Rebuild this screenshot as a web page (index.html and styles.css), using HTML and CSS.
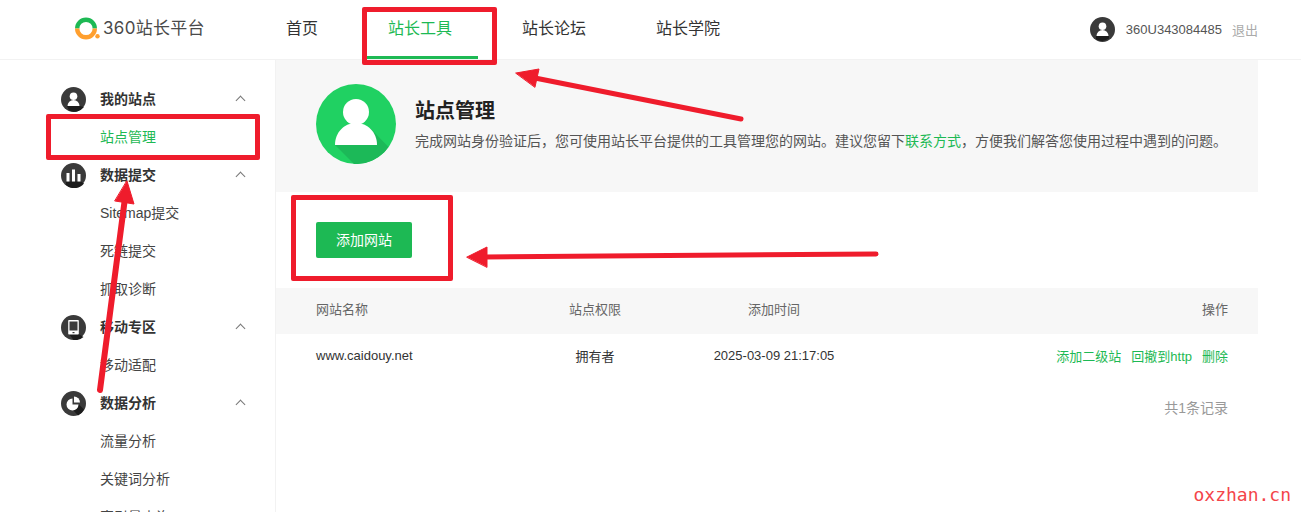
FILE: index.html
```html
<!DOCTYPE html>
<html lang="zh-CN">
<head>
    <meta charset="UTF-8">
    <title>360站长平台 - 站点管理</title>
    <link rel="stylesheet" href="styles.css">
</head>
<body>

    <!-- Top bar -->
    <header class="topbar">
        <div class="logo">
            <svg class="logo-mark" width="25" height="24" viewBox="0 0 25 24">
                <path d="M2.200 12.500a8.800 8.800 0 1 1 17.600 0" fill="none" stroke="#1db954" stroke-width="4.400"/>
                <path d="M2.200 12.500a8.800 8.800 0 0 0 17.600 0" fill="none" stroke="#ff9f2e" stroke-width="4.400"/>
                <circle cx="22.500" cy="20.300" r="2.200" fill="#ff9f2e"/>
            </svg>
            <span class="logo-text">360站长平台</span>
        </div>
        <nav class="nav">
            <a href="#">首页</a>
            <a href="#" class="active">站长工具</a>
            <a href="#">站长论坛</a>
            <a href="#">站长学院</a>
        </nav>
        <div class="user">
            <svg class="round-icon" width="25" height="25" viewBox="0 0 25 25">
                <circle cx="12.500" cy="12.500" r="12.500" fill="#3a3a3a"/>
                <path d="M6 19h13v2.500a12.500 12.500 0 0 1-13 .8z" fill="#1c1c1c"/>
                <circle cx="12.500" cy="9.300" r="3.800" fill="#fff"/>
                <path d="M6.500 19a6 6 0 0 1 12 0z" fill="#fff"/>
            </svg>
            <span class="user-name">360U343084485</span>
            <a href="#" class="logout">退出</a>
        </div>
    </header>

    <div class="layout">

        <!-- Sidebar -->
        <aside class="sidebar">
            <div class="side-group">
                <svg class="round-icon" width="25" height="25" viewBox="0 0 25 25">
                    <circle cx="12.500" cy="12.500" r="12.500" fill="#3a3a3a"/>
                    <path d="M6 19h13l4 1a12.500 12.500 0 0 1-15 3.600z" fill="#1c1c1c"/>
                    <circle cx="12.500" cy="9.300" r="3.800" fill="#fff"/>
                    <path d="M6.500 19a6 6 0 0 1 12 0z" fill="#fff"/>
                </svg>
                <span>我的站点</span>
                <i class="chevron"></i>
            </div>
            <a href="#" class="side-item active">站点管理</a>

            <div class="side-group">
                <svg class="round-icon" width="25" height="25" viewBox="0 0 25 25">
                    <circle cx="12.500" cy="12.500" r="12.500" fill="#3a3a3a"/>
                    <path d="M5 18.500h15l3 2a12.500 12.500 0 0 1-18 1.500z" fill="#1c1c1c"/>
                    <path d="M5.500 10h3v8.500h-3zM11 6.500h3v12h-3zM16.500 11h3v7.500h-3z" fill="#fff"/>
                </svg>
                <span>数据提交</span>
                <i class="chevron"></i>
            </div>
            <a href="#" class="side-item">Sitemap提交</a>
            <a href="#" class="side-item">死链提交</a>
            <a href="#" class="side-item">抓取诊断</a>

            <div class="side-group">
                <svg class="round-icon" width="25" height="25" viewBox="0 0 25 25">
                    <circle cx="12.500" cy="12.500" r="12.500" fill="#3a3a3a"/>
                    <path d="M8 19h9.500l5 3a12.500 12.500 0 0 1-10 3z" fill="#1c1c1c"/>
                    <rect x="7.200" y="5" width="10.600" height="14.600" rx="0.800" fill="#fff"/>
                    <rect x="8.500" y="6.500" width="8" height="9" fill="#3a3a3a"/>
                    <rect x="11.500" y="17" width="2" height="1.200" fill="#3a3a3a"/>
                </svg>
                <span>移动专区</span>
                <i class="chevron"></i>
            </div>
            <a href="#" class="side-item">移动适配</a>

            <div class="side-group">
                <svg class="round-icon" width="25" height="25" viewBox="0 0 25 25">
                    <circle cx="12.500" cy="12.500" r="12.500" fill="#3a3a3a"/>
                    <path d="M12 19l5 5.500a12.500 12.500 0 0 0 6-6l-5-5z" fill="#1c1c1c"/>
                    <path d="M11.500 7.500v6h6a6 6 0 1 1-6-6z" fill="#fff"/>
                    <path d="M13 5.500a6 6 0 0 1 6 6h-6z" fill="#fff"/>
                </svg>
                <span>数据分析</span>
                <i class="chevron"></i>
            </div>
            <a href="#" class="side-item">流量分析</a>
            <a href="#" class="side-item">关键词分析</a>
            <a href="#" class="side-item">索引量查询</a>
        </aside>

        <!-- Main content -->
        <main class="content">
            <section class="banner">
                <svg class="banner-icon" width="80" height="80" viewBox="0 0 80 80">
                    <circle cx="40" cy="40" r="40" fill="#20d162"/>
                    <path d="M19 61L38 80A40 40 0 0 0 72.500 63L54 44z" fill="#1cb958"/>
                    <circle cx="40" cy="28" r="13" fill="#fff"/>
                    <path d="M19 61c0-13 9.500-22 21-22s21 9 21 22z" fill="#fff"/>
                </svg>
                <div class="banner-text">
                    <h2>站点管理</h2>
                    <p>完成网站身份验证后，您可使用站长平台提供的工具管理您的网站。建议您留下<a href="#">联系方式</a>，方便我们解答您使用过程中遇到的问题。</p>
                </div>
            </section>

            <div class="toolbar">
                <button class="add-btn">添加网站</button>
            </div>

            <div class="site-row site-head">
                <div>网站名称</div>
                <div class="center">站点权限</div>
                <div class="center">添加时间</div>
                <div class="right">操作</div>
            </div>
            <div class="site-row site-body">
                <div>www.caidouy.net</div>
                <div class="center">拥有者</div>
                <div class="center">2025-03-09 21:17:05</div>
                <div class="actions">
                    <a href="#">添加二级站</a>
                    <a href="#">回撤到http</a>
                    <a href="#">删除</a>
                </div>
            </div>
            <div class="total">共1条记录</div>
        </main>
    </div>

    <!-- Red annotations drawn over the page -->
    <div class="mark mark-nav"></div>
    <div class="mark mark-side"></div>
    <div class="mark mark-btn"></div>
    <svg class="arrows" width="1301" height="512" viewBox="0 0 1301 512">
        <g fill="#ef1c2c" stroke="#ef1c2c" stroke-linecap="round" stroke-linejoin="round">
            <path d="M741 119L535 78" fill="none" stroke-width="5"/>
            <path d="M516 73L539 69L535 87z" stroke-width="1"/>
            <path d="M876 254L485 257" fill="none" stroke-width="5"/>
            <path d="M467 257L487 247L487 267z" stroke-width="1"/>
            <path d="M100 390L125 198" fill="none" stroke-width="6"/>
            <path d="M127 181L134 204L115 201z" stroke-width="1"/>
        </g>
    </svg>
    <div class="watermark">oxzhan.cn</div>

</body>
</html>
```

FILE: styles.css
```css
* {
    box-sizing: border-box;
}

html, body {
    height: 512px;
    overflow: hidden;
}

body {
    margin: 0;
    position: relative;
    background: #fff;
    font-family: "Liberation Sans", "Noto Sans CJK SC", sans-serif;
    font-size: 13px;
    color: #333;
}

a {
    color: inherit;
    text-decoration: none;
}

.topbar {
    display: flex;
    align-items: center;
    height: 60px;
    padding: 0 43px 0 75px;
    border-bottom: 1px solid #f2f2f2;
}

.logo {
    display: flex;
    align-items: center;
    width: 211px;
    height: 49px;
    margin-bottom: 6px;
    align-self: flex-start;
    padding-top: 6px;
}

.logo-mark {
    display: block;
}

.logo-text {
    margin-left: 3px;
    font-family: Inter, "Noto Sans CJK SC", sans-serif;
    font-size: 17px;
    line-height: 24px;
    letter-spacing: 0.3px;
    color: #4a4a4a;
}

.nav {
    display: flex;
    gap: 70px;
    height: 59px;
    font-size: 16px;
}

.nav a {
    position: relative;
    line-height: 57px;
    color: #333;
}

.nav a.active {
    color: #1db954;
}

.nav a.active::after {
    content: "";
    position: absolute;
    left: -22px;
    right: -26px;
    bottom: 0;
    height: 3px;
    background: #1db954;
}

.user {
    display: flex;
    align-items: center;
    margin-left: auto;
}

.user-name {
    margin-left: 11px;
    color: #555;
}

.logout {
    margin-left: 10px;
    color: #aaa;
}

.round-icon {
    display: block;
    flex: none;
}

.layout {
    display: flex;
    height: 452px;
    padding-right: 43px;
}

.sidebar {
    width: 276px;
    flex: none;
    padding: 20px 29px 0 61px;
    border-right: 1px solid #f2f2f2;
    font-size: 14px;
}

.side-group {
    display: flex;
    align-items: center;
    height: 38px;
    font-weight: bold;
    color: #333;
}

.side-group span {
    margin: 0 0 2px 14px;
}

.chevron {
    width: 7px;
    height: 7px;
    margin: 2px 2px 0 auto;
    border-top: 1px solid #777;
    border-left: 1px solid #777;
    transform: rotate(45deg);
}

.side-item {
    display: block;
    height: 38px;
    padding-left: 39px;
    line-height: 38px;
    color: #444;
}

.side-item.active {
    color: #1db954;
}

.content {
    flex: 1;
}

.banner {
    display: flex;
    align-items: flex-start;
    height: 132px;
    padding: 24px 0 0 40px;
    background: #f7f7f7;
}

.banner-icon {
    display: block;
    flex: none;
}

.banner-text {
    margin-left: 19px;
}

.banner-text h2 {
    margin: 13px 0 0;
    font-size: 20px;
    line-height: 28px;
    color: #222;
}

.banner-text p {
    margin: 6px 0 0;
    font-size: 14px;
    line-height: 20px;
    color: #555;
    white-space: nowrap;
}

.banner-text a {
    color: #1db954;
}

.toolbar {
    height: 96px;
    padding: 30px 0 0 40px;
}

.add-btn {
    display: block;
    width: 96px;
    height: 36px;
    padding: 0 0 2px;
    border: none;
    border-radius: 2px;
    background: #1db954;
    color: #fff;
    font-family: inherit;
    font-size: 14px;
}

.site-row {
    display: grid;
    grid-template-columns: 169px 220px 138px 1fr;
    align-items: center;
    height: 46px;
    padding: 0 30px 4px 40px;
}

.site-head {
    padding-bottom: 6px;
    background: #f7f7f7;
    color: #666;
}

.site-body {
    color: #333;
}

.center {
    text-align: center;
}

.right {
    text-align: right;
}

.actions {
    display: flex;
    justify-content: flex-end;
    gap: 10px;
    color: #1db954;
}

.total {
    margin-top: 17px;
    padding-right: 30px;
    font-size: 14px;
    text-align: right;
    color: #999;
}

.mark {
    position: absolute;
    border: 5px solid #ef1c2c;
    border-radius: 2px;
}

.mark-nav {
    left: 362px;
    top: 7px;
    width: 135px;
    height: 58px;
}

.mark-side {
    left: 46px;
    top: 114px;
    width: 214px;
    height: 46px;
}

.mark-btn {
    left: 291px;
    top: 195px;
    width: 162px;
    height: 86px;
}

.arrows {
    position: absolute;
    left: 0;
    top: 0;
}

.watermark {
    position: absolute;
    right: 10px;
    top: 484px;
    font-family: "DejaVu Sans Mono", monospace;
    font-size: 18px;
    line-height: 22px;
    color: #f4454a;
}
```
